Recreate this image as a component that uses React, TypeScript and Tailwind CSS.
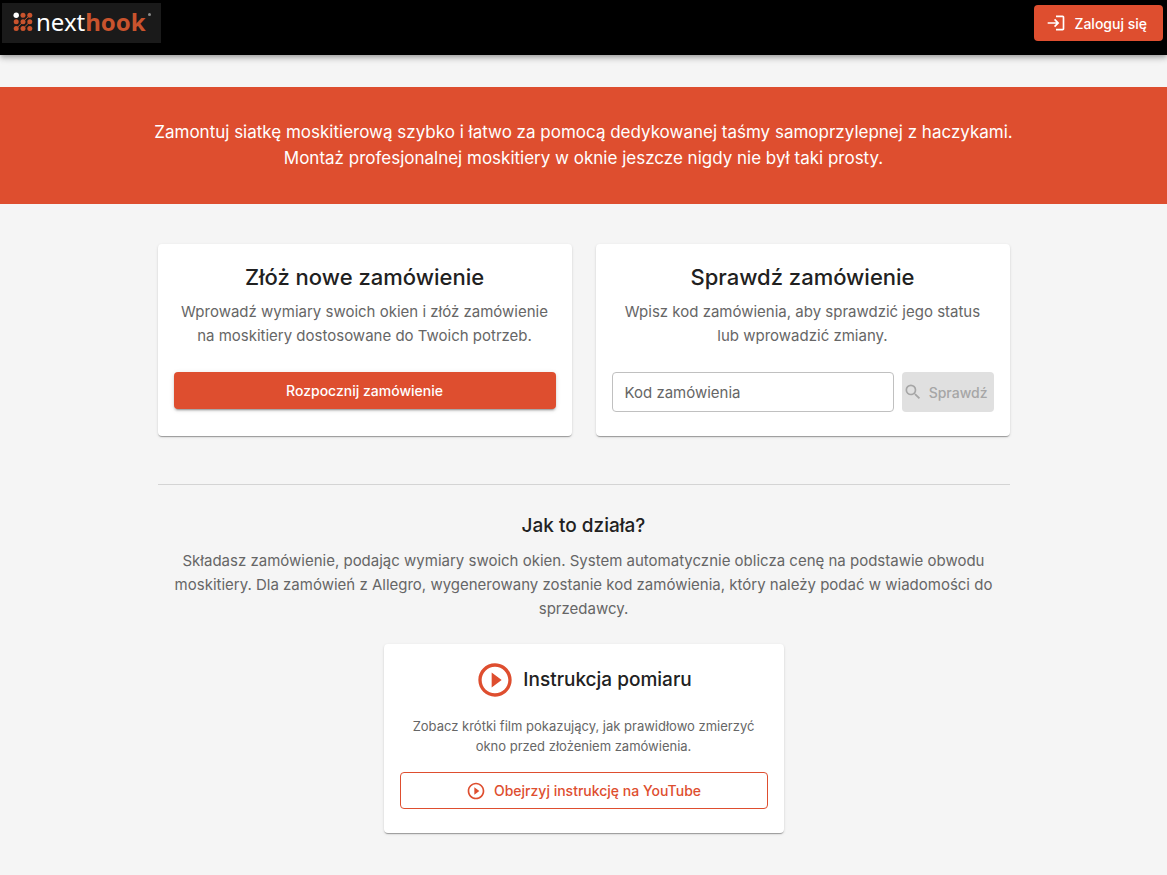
import { type ReactNode } from "react";
import { MdLogin, MdPlayCircleOutline, MdSearch } from "react-icons/md";

const CARD =
  "rounded bg-white px-4 pt-4 pb-6 text-center shadow-[0_2px_1px_-1px_rgba(0,0,0,0.2),0_1px_1px_rgba(0,0,0,0.14),0_1px_3px_rgba(0,0,0,0.12)]";

function Logo() {
  return (
    <a
      href="#"
      aria-label="nexthook"
      className="flex h-10 w-[159px] items-center bg-[#1a1a1a] pb-0.5 pl-[11px]"
    >
      <svg viewBox="0 0 20 20" className="h-5 w-5 shrink-0" aria-hidden="true">
        <path
          d="M10 9.8 L16.8 3.2 M3.2 16.6 L10 9.8 M10 16.6 L16.8 9.8"
          stroke="#c9532d"
          strokeWidth="1"
          fill="none"
        />
        <g fill="#c9532d">
          <circle cx="10" cy="3.2" r="2.5" />
          <circle cx="16.8" cy="3.2" r="2.5" />
          <circle cx="3.2" cy="9.8" r="2.5" />
          <circle cx="10" cy="9.8" r="2.5" />
          <circle cx="16.8" cy="9.8" r="2.5" />
          <circle cx="3.2" cy="16.6" r="2.5" />
          <circle cx="10" cy="16.6" r="2.5" />
          <circle cx="16.8" cy="16.6" r="2.5" />
        </g>
        <circle cx="3.2" cy="3.2" r="2.7" fill="#fff" />
      </svg>
      <span className="ml-[3px] font-['Noto_Sans',sans-serif] text-[24px] leading-8 text-white">
        next<span className="font-bold text-[#c9532d]">hook</span>
      </span>
      <span className="mb-4 ml-0.5 size-[3px] rounded-full bg-[#8a8a8a]" />
    </a>
  );
}

function OrderCard({ title, children, text }: { title: string; text: ReactNode; children: ReactNode }) {
  return (
    <section className={CARD}>
      <h2 className="text-[22px] leading-[34px] font-medium">{title}</h2>
      <p className="mt-1.5 mb-6 text-[15px] leading-6 text-[#666]">{text}</p>
      {children}
    </section>
  );
}

export default function App() {
  return (
    <div className="min-h-screen bg-[#f5f5f5] font-[Inter,sans-serif] text-[#212121]">
      <header className="flex h-[55px] items-start justify-between bg-black pt-[3px] pr-1 pl-0.5 shadow-[0_2px_4px_-1px_rgba(0,0,0,0.2),0_4px_5px_rgba(0,0,0,0.14),0_1px_10px_rgba(0,0,0,0.12)]">
        <Logo />
        <button className="mt-0.5 flex h-9 items-center rounded bg-[#de4e2f] pr-4 pl-3 text-[14px] font-medium text-white">
          <MdLogin className="mr-2 size-5" />
          Zaloguj się
        </button>
      </header>

      <div className="mt-8 bg-[#de4e2f] px-6 pt-8 pb-[33px] text-center text-[17px] leading-[26px] text-white">
        <p className="mx-auto max-w-[900px]">
          Zamontuj siatkę moskitierową szybko i łatwo za pomocą dedykowanej taśmy samoprzylepnej z
          haczykami. <br />
          Montaż profesjonalnej moskitiery w oknie jeszcze nigdy nie był taki prosty.
        </p>
      </div>

      <main className="mx-auto max-w-[900px] px-6 pt-10 pb-10">
        <div className="grid gap-6 md:grid-cols-2">
          <OrderCard
            title="Złóż nowe zamówienie"
            text="Wprowadź wymiary swoich okien i złóż zamówienie na moskitiery dostosowane do Twoich potrzeb."
          >
            <button className="h-[37px] w-full rounded bg-[#de4e2f] text-[14px] font-medium text-white shadow-[0_3px_1px_-2px_rgba(0,0,0,0.2),0_2px_2px_rgba(0,0,0,0.14),0_1px_5px_rgba(0,0,0,0.12)]">
              Rozpocznij zamówienie
            </button>
          </OrderCard>
          <OrderCard
            title="Sprawdź zamówienie"
            text={
              <>
                Wpisz kod zamówienia, aby sprawdzić jego status <br />
                lub wprowadzić zmiany.
              </>
            }
          >
            <form className="flex gap-2">
              <input
                type="text"
                aria-label="Kod zamówienia"
                placeholder="Kod zamówienia"
                className="h-10 min-w-0 flex-1 rounded border border-[#c0c0c0] bg-white px-3 text-[15px] placeholder:text-[#666]"
              />
              <button
                type="button"
                disabled
                className="flex h-10 w-[92px] items-center justify-between rounded bg-[#e0e0e0] pr-1.5 pl-px text-[14px] font-medium text-[#a6a6a6]"
              >
                <MdSearch className="size-5" />
                Sprawdź
              </button>
            </form>
          </OrderCard>
        </div>

        <hr className="mt-12 border-[#d4d4d4]" />

        <section className="mt-6 text-center">
          <h2 className="text-[19px] leading-[34px] font-medium">Jak to działa?</h2>
          <p className="mt-1.5 text-[15px] leading-6 text-[#666]">
            Składasz zamówienie, podając wymiary swoich okien. System automatycznie oblicza cenę na
            podstawie obwodu moskitiery. Dla zamówień z Allegro, wygenerowany zostanie kod
            zamówienia, który należy podać w wiadomości do sprzedawcy.
          </p>
        </section>

        <section className={`${CARD} mx-auto mt-[23px] max-w-[400px]`}>
          <div className="flex items-center justify-center gap-2">
            <MdPlayCircleOutline className="size-10 text-[#de4e2f]" />
            <h3 className="text-[19px] leading-[34px] font-medium">Instrukcja pomiaru</h3>
          </div>
          <p className="mt-4 text-[13px] leading-5 text-[#666]">
            Zobacz krótki film pokazujący, jak prawidłowo zmierzyć okno przed złożeniem zamówienia.
          </p>
          <a
            href="#"
            className="mt-4 flex h-[37px] items-center justify-center gap-2 rounded border border-[#de4e2f] text-[14px] font-medium text-[#de4e2f]"
          >
            <MdPlayCircleOutline className="size-5" />
            Obejrzyj instrukcję na YouTube
          </a>
        </section>
      </main>
    </div>
  );
}
